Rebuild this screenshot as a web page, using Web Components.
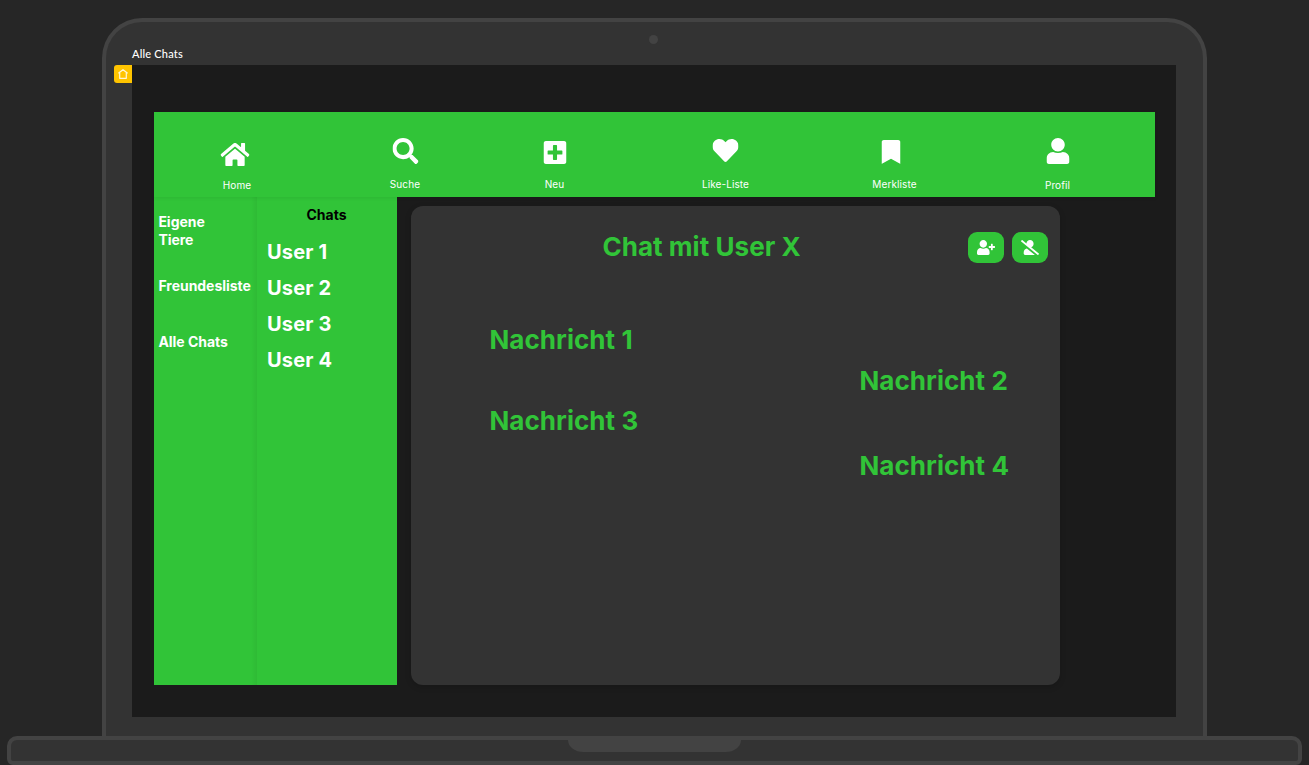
<!DOCTYPE html>
<html lang="de">
<head>
<meta charset="utf-8">
<title>Alle Chats</title>
<style>
html,body{margin:0;height:100%;overflow:hidden;background:#262626}
body{font-family:Inter,"Liberation Sans",sans-serif}
</style>
</head>
<body>
<laptop-frame caption="Alle Chats">
  <nav-bar slot="nav">
    <nav-item icon="home" style="--ml:32.5px;--iw:29px;--ih:23px;--it:31px;--is:-1.5px;--lt:66px">Home</nav-item>
    <nav-item icon="search" style="--ml:68px;--iw:26px;--ih:26px;--it:26px;--is:.5px">Suche</nav-item>
    <nav-item icon="plus" style="--ml:49.5px;--iw:23px;--ih:23px;--it:29px;--is:.5px">Neu</nav-item>
    <nav-item icon="heart" style="--ml:71px;--iw:26px;--ih:23px;--it:27px;--is:.5px">Like-Liste</nav-item>
    <nav-item icon="bookmark" style="--ml:69px;--iw:19px;--ih:24px;--it:28px;--is:-3.500px">Merkliste</nav-item>
    <nav-item icon="user" style="--ml:63px;--iw:23px;--ih:26px;--it:26px;--is:0.5px;--lt:66px">Profil</nav-item>
  </nav-bar>
  <side-menu slot="side"><span>Eigene Tiere</span><span>Freundesliste</span><span>Alle Chats</span></side-menu>
  <chat-list slot="list" heading="Chats"><span>User 1</span><span>User 2</span><span>User 3</span><span>User 4</span></chat-list>
  <chat-panel slot="panel" heading="Chat mit User X">
    <chat-message style="--top:57px">Nachricht 1</chat-message>
    <chat-message own style="--top:1px">Nachricht 2</chat-message>
    <chat-message style="--top:0px">Nachricht 3</chat-message>
    <chat-message own style="--top:5px">Nachricht 4</chat-message>
  </chat-panel>
</laptop-frame>
<script>
const define = (name, html, setup) => customElements.define(name, class extends HTMLElement {
  constructor() {
    super();
    this.attachShadow({mode: 'open'}).innerHTML = html;
  }
  connectedCallback() { if (setup) setup(this, this.shadowRoot); }
});

const BODY = 'M224 264c72.900 0 132-59.100 132-132S296.900 0 224 0 92 59.100 92 132s59.100 132 132 132zm94 10c-28 14-60 22-94 22s-66-8-94-22C56 274 0 336 0 410V464c0 26.500 21.500 48 48 48h352c26.500 0 48-21.500 48-48v-54c0-74-56-136-130-136z';
const ICONS = {
  home: ['0 32 576 448', 'M280.37 148.26L96 300.11V464a16 16 0 0 0 16 16l112.06-.29a16 16 0 0 0 15.92-16V368a16 16 0 0 1 16-16h64a16 16 0 0 1 16 16v95.64a16 16 0 0 0 16 16.05L464 480a16 16 0 0 0 16-16V300L295.67 148.26a12.19 12.19 0 0 0-15.3 0zM571.6 251.47L488 182.56V44.05a12 12 0 0 0-12-12h-56a12 12 0 0 0-12 12v72.61L318.47 43a48 48 0 0 0-61 0L4.34 251.47a12 12 0 0 0-1.6 16.9l25.5 31A12 12 0 0 0 45.15 301l235.22-193.74a12.19 12.19 0 0 1 15.3 0L530.9 301a12 12 0 0 0 16.9-1.6l25.5-31a12 12 0 0 0-1.7-16.93z'],
  search: ['0 0 512 512', 'M505 442.7L405.3 343c-4.5-4.5-10.6-7-17-7H372c27.6-35.3 44-79.7 44-128C416 93.1 322.9 0 208 0S0 93.1 0 208s93.1 208 208 208c48.3 0 92.7-16.4 128-44v16.3c0 6.4 2.5 12.5 7 17l99.7 99.7c9.4 9.4 24.6 9.4 33.9 0l28.3-28.3c9.4-9.4 9.4-24.6.1-34zM208 336c-70.7 0-128-57.2-128-128 0-70.7 57.2-128 128-128 70.7 0 128 57.2 128 128 0 70.7-57.2 128-128 128z'],
  plus: ['0 32 448 448', 'M400 32H48C21.5 32 0 53.5 0 80v352c0 26.5 21.5 48 48 48h352c26.5 0 48-21.5 48-48V80c0-26.5-21.5-48-48-48zm-32 252c0 6.6-5.4 12-12 12h-92v92c0 6.6-5.4 12-12 12h-56c-6.6 0-12-5.4-12-12v-92H92c-6.6 0-12-5.4-12-12v-56c0-6.6 5.4-12 12-12h92v-92c0-6.6 5.4-12 12-12h56c6.6 0 12 5.4 12 12v92h92c6.6 0 12 5.4 12 12v56z'],
  heart: ['0 32 512 448', 'M462.3 62.6C407.5 15.9 326 24.3 275.7 76.2L256 96.5l-19.7-20.3C186.1 24.3 104.5 15.9 49.7 62.6c-62.8 53.6-66.1 149.8-9.9 207.9l193.5 199.8c12.5 12.9 32.8 12.9 45.3 0l193.5-199.8c56.3-58.1 53-154.3-9.8-207.9z'],
  bookmark: ['0 0 384 512', 'M0 512V48C0 21.49 21.49 0 48 0h288c26.51 0 48 21.49 48 48v464L192 400 0 512z'],
  user: ['0 0 448 512', BODY],
  add: ['0 0 640 512', 'M624 208h-64v-64c0-8.800-7.200-16-16-16h-32c-8.800 0-16 7.200-16 16v64h-64c-8.800 0-16 7.200-16 16v32c0 8.800 7.200 16 16 16h64v64c0 8.800 7.200 16 16 16h32c8.800 0 16-7.200 16-16v-64h64c8.800 0 16-7.200 16-16v-32c0-8.800-7.200-16-16-16z' + BODY],
  slash: ['0 0 640 512', 'M633.8 458.100L362.300 248.300C412.100 230.700 448 183.800 448 128 448 57.300 390.700 0 320 0c-67.100 0-121.500 51.800-126.900 117.400L45.500 3.400C38.500-2 28.500-.8 23 6.200L3.400 31.400c-5.400 7-4.200 17 2.800 22.400l588.400 454.700c7 5.400 17 4.200 22.500-2.800l19.600-25.300c5.400-6.800 4.100-16.900-2.900-22.300zM96 422.400V464c0 26.500 21.500 48 48 48h350.200L207.400 290.300C144.200 301.300 96 356 96 422.400z']
};

define('ui-icon', `<style>:host{display:block}svg{display:block;width:100%;height:100%;fill:#fff}</style><svg preserveAspectRatio="none"><path/></svg>`, (el, root) => {
  const [box, d] = ICONS[el.getAttribute('name')];
  root.querySelector('svg').setAttribute('viewBox', box);
  root.querySelector('path').setAttribute('d', d);
});

define('laptop-frame', `<style>
:host{display:flex;flex-direction:column;align-items:center;height:765px;overflow:hidden}
.lid{position:relative;box-sizing:border-box;width:1105px;height:718px;margin-top:18px;padding:43px 27px 0 26px;border:4px solid #434343;border-bottom:0;border-radius:40px 40px 0 0;background:#333}
.camera{position:absolute;left:543px;top:13px;width:9px;height:9px;border-radius:50%;background:#434343}
.caption{position:absolute;left:26px;top:24px;font:500 11px/16px Lato,sans-serif;letter-spacing:.2px;color:#fff;white-space:nowrap}
.badge{position:absolute;left:8px;top:43px;width:18px;height:18px;border-radius:3px 0 0 3px;background:#ffc400}
.badge svg{display:block}
.screen{box-sizing:border-box;height:652px;padding:47px 21px 0 22px;background:#1b1b1b}
.content{display:grid;grid-template-columns:103px 140px 14px 649px;height:488px}
.base{position:relative;box-sizing:border-box;flex:none;width:1295px;height:29px;border:4px solid #434343;border-radius:10px 10px 6px 6px;background:#333}
.grip{width:173px;height:12px;margin:0 auto;border-radius:0 0 18px 18px / 0 0 14px 14px;background:#434343}
</style>
<div class="lid"><div class="camera"></div><div class="caption"></div>
<div class="badge"><svg width="18" height="18" fill="none" stroke="#fff" stroke-opacity=".85" stroke-width="1.2" stroke-linejoin="round"><path d="M9 4.700 4.700 8 H5.700 V13.300 H12.300 V8 H13.300Z"/></svg></div>
<div class="screen"><slot name="nav"></slot><div class="content"><slot name="side"></slot><slot name="list"></slot><i></i><slot name="panel"></slot></div></div></div>
<div class="base"><div class="grip"></div></div>`, (el, root) => root.querySelector('.caption').textContent = el.getAttribute('caption'));

define('nav-bar', `<style>:host{display:flex;height:85px;background:#31c438;position:relative;box-shadow:0 1px 4px rgba(0,0,0,.08)}</style><slot></slot>`);

define('nav-item', `<style>
:host{display:grid;grid-template-rows:var(--lt,65px) 14px;flex:none;width:100px;margin-left:var(--ml);justify-items:center;color:#fff;font-size:10px;line-height:14px;letter-spacing:.1px;white-space:nowrap}
.icon{width:var(--iw);height:var(--ih);margin-top:var(--it);transform:translateX(var(--is))}
.label{transform:translateX(.5px)}
</style><div class="icon"></div><div class="label"><slot></slot></div>`, (el, root) => {
  const icon = document.createElement('ui-icon');
  icon.setAttribute('name', el.getAttribute('icon'));
  icon.style.height = '100%';
  root.querySelector('.icon').append(icon);
});

define('side-menu', `<style>
:host{display:flex;flex-direction:column;gap:38px;box-sizing:border-box;padding:16px 0 0 4.400px;background:linear-gradient(90deg,transparent 97px,rgba(0,0,0,.05)) #31c438;color:#fff;font-weight:700;font-size:14px;line-height:18px;letter-spacing:-.03px}
::slotted(span){width:70px}
::slotted(span:first-child){margin-bottom:-10px}
</style><slot></slot>`);

define('chat-list', `<style>
:host{display:flex;flex-direction:column;box-sizing:border-box;padding:9px 0 0 10px;background:#31c438;color:#fff;font-weight:700;font-size:20px;line-height:36px;letter-spacing:.15px}
header{margin:0 11px 10px 0;text-align:center;color:#000;font-size:14px;line-height:18px;letter-spacing:0}
</style><header></header><slot></slot>`, (el, root) => root.querySelector('header').textContent = el.getAttribute('heading'));

define('chat-panel', `<style>
:host{display:block;box-sizing:border-box;height:479px;margin-top:9px;padding:26px 12px 0;border-radius:12px;background:#333;color:#31c438;font-weight:700;font-size:26px;line-height:40px;letter-spacing:.05px;box-shadow:0 2px 6px rgba(0,0,0,.15)}
header{display:grid;grid-template-columns:1fr 36px 36px;column-gap:8px;height:31px}
h1{font:inherit;line-height:29px;margin:0;padding-left:179.400px;white-space:nowrap}
.button{display:grid;place-items:center;border-radius:9px;background:#31c438}
.button ui-icon{width:18px;height:15px}
</style><header><h1></h1><div class="button"><ui-icon name="add"></ui-icon></div><div class="button"><ui-icon name="slash"></ui-icon></div></header><slot></slot>`, (el, root) => root.querySelector('h1').textContent = el.getAttribute('heading'));

define('chat-message', `<style>:host{display:block;margin-top:var(--top);padding-left:66.500px}:host([own]){padding-left:436.500px}</style><slot></slot>`);
</script>
</body>
</html>
